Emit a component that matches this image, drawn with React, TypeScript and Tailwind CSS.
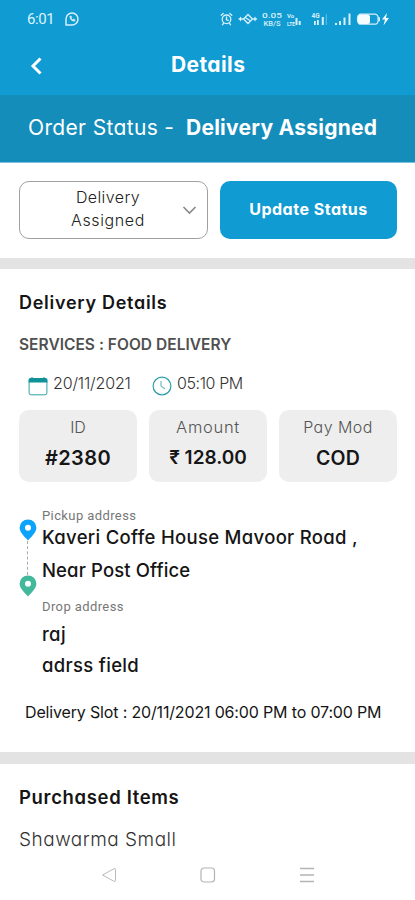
import React from "react";

function StatusIcons() {
  return (
    <svg width="172" height="20" viewBox="0 0 172 20" fill="none" stroke="#d8f0fb" strokeWidth="1.3" strokeLinecap="round">
      <circle cx="6.5" cy="10.300" r="4.300" />
      <path d="M6.5 8v2.800l1.800.6M1.200 6.300l2-1.800M11.800 6.300l-2-1.800M3.500 14.500l-1 1.200M9.500 14.500l1 1.200" />
      <path d="M19 10h4M33 10h3.500M20.500 8.500v3M35 8.500v3M23.500 10l4.500-4.500 4.500 4.500-4.500 4.500zM26 9l4 2.500" />
      <g fill="#d8f0fb" stroke="none" fontFamily="Roboto, sans-serif" fontWeight="500">
        <text x="42" y="9" fontSize="8" textLength="20" lengthAdjust="spacingAndGlyphs">0.05</text>
        <text x="43.500" y="17" fontSize="6.500" textLength="17" lengthAdjust="spacingAndGlyphs">KB/S</text>
        <text x="67" y="9" fontSize="6" fontWeight="700">Vo</text>
        <text x="67" y="16.500" fontSize="5.500" fontWeight="700" textLength="8" lengthAdjust="spacingAndGlyphs">LTE</text>
        <text x="91.500" y="9.300" fontSize="6.500" fontWeight="700">4G</text>
      </g>
      <g fill="#d8f0fb" stroke="none">
        <path d="M75.500 9h2v7h-2zM78.700 12h2v4h-2z" />
        <path d="M94 12h1.800v4h-1.800zM97 11h1.800v5h-1.800zM101.800 8h2v8h-2z" />
        <path d="M105.800 5h1v11h-1z" opacity=".45" />
        <path d="M115 14h2v2h-2zM119 12h2v4h-2zM123.500 8.500h2v7.500h-2zM128.500 4.500h2v11.500h-2z" />
      </g>
      <rect x="137.600" y="5.200" width="20.500" height="10" rx="3.500" />
      <rect x="138" y="5.500" width="12" height="9.500" rx="2.500" fill="#f5fcff" stroke="none" />
      <path d="M159.200 8.700v3" strokeWidth="1.500" />
      <path d="M167 4l-5 6.500h3l-1.500 6 5.500-7.500h-3z" fill="#f5fcff" stroke="none" />
    </svg>
  );
}

function Pin({ color }: { color: string }) {
  return (
    <svg className="block shrink-0" width="18" height="22" viewBox="0 0 18 22">
      <path d="M9 21.500C6 18 .6 13.500.6 8.800a8.400 8.400 0 0 1 16.800 0C17.400 13.500 12 18 9 21.500z" fill={color} />
      <circle cx="9" cy="8.800" r="3" fill="#fff" />
    </svg>
  );
}

function Stat({ label, value, labelClass, valueClass }: { label: string; value: string; labelClass: string; valueClass: string }) {
  return (
    <div className="flex h-[72px] w-[118px] flex-col items-center rounded-[10px] bg-[#eeeeee] pt-1.5">
      <div className={"h-[22px] leading-[22px] font-light text-[#555] " + labelClass}>{label}</div>
      <div className={"mt-1 h-8 leading-8 font-semibold text-[#161616] " + valueClass}>{value}</div>
    </div>
  );
}

export default function App() {
  return (
    <div className="flex h-[900px] w-[415px] flex-col overflow-hidden bg-white font-[Inter,sans-serif] whitespace-nowrap text-[#151515] [font-feature-settings:'cv11']">
      <header className="h-[95px] bg-[#109bd2] text-white">
        <div className="flex h-[38px] items-center pl-[27px]">
          <span className="w-[38px] font-[Roboto,sans-serif] text-[15px] leading-5 tracking-[-0.4px] text-[#dff3fc]">6:01</span>
          <svg width="14" height="14" viewBox="0 0 14 14" fill="none" stroke="#d8f0fb" strokeWidth="1.500">
            <path d="M1 13V7a6 6 0 1 1 6 6z" strokeLinejoin="round" />
            <path d="M4.800 4.200c0 3 2 5 5 5l.3-1.500-1.600-.6-.8.7-1.500-1.500.6-.9-.7-1.500z" fill="#d8f0fb" strokeWidth=".5" />
          </svg>
          <div className="ml-[141px]"><StatusIcons /></div>
        </div>
        <div className="flex h-[52px] items-center pl-[29px]">
          <svg className="mt-1" width="14" height="18" viewBox="0 0 14 18" fill="none" stroke="#fff" strokeWidth="3">
            <path d="M11.500 1.500L4 9l7.500 7.500" />
          </svg>
          <h1 className="ml-[128px] pt-px text-[21px] leading-7 font-bold tracking-[0.4px]">Details</h1>
        </div>
      </header>
      <div className="flex h-[68px] items-center border-b border-[#7fc0dc] bg-[#148dba] pb-px pl-[28px] text-white">
        <span className="w-[158px] text-[21px] tracking-[0.35px]">Order Status -</span>
        <span className="text-[21px] font-bold tracking-[0.25px]">Delivery Assigned</span>
      </div>
      <div className="flex h-[95px] gap-3 pt-[18px] pl-[19px]">
        <div className="flex h-[58px] w-[189px] items-center rounded-[10px] border border-[#a0a0a0]">
          <div className="flex w-[176px] flex-col items-center pb-[3px] text-[16px] leading-[22.500px] font-light text-[#222]">
            <span className="tracking-[0.4px]">Delivery</span>
            <span className="tracking-[0.6px]">Assigned</span>
          </div>
          <svg className="-ml-[14px]" width="15" height="9" viewBox="0 0 15 9" fill="none" stroke="#888" strokeWidth="1.600">
            <path d="M1.500 1l6 6 6-6" />
          </svg>
        </div>
        <button className="h-[58px] w-[177px] rounded-[10px] bg-[#109bd2] pb-[3px] text-[16px] font-bold tracking-[0.5px] text-white">Update Status</button>
      </div>
      <div className="h-[11px] bg-[#e3e3e3]" />
      <section className="h-[483px] pt-5 pl-[19px]">
        <h2 className="h-[26px] text-[18px] leading-[27px] font-semibold tracking-[0.72px]">Delivery Details</h2>
        <div className="mt-[18px] h-6 text-[15.500px] leading-6 font-semibold tracking-[0.03px] text-[#505050]">SERVICES : FOOD DELIVERY</div>
        <div className="mt-[14px] flex h-[26px] items-center pl-[9px] text-[16px] font-light text-[#333]">
          <svg className="mt-1 mr-[5px]" width="20" height="20" viewBox="0 0 20 20">
            <rect x="1.100" y="2.500" width="17.800" height="16.300" rx="2" fill="none" stroke="#32a2ab" />
            <path d="M.6 6.500V4q0-2 2-2h14.800q2 0 2 2v2.500z" fill="#109299" />
            <path d="M4 1v2M16 1v2" stroke="#109299" />
          </svg>
          <span className="w-[99px] pb-[2px] tracking-[-0.15px]">20/11/2021</span>
          <svg className="mt-[3px] mr-[5px]" width="20" height="20" viewBox="0 0 20 20" fill="none" stroke="#259aa2" strokeWidth="1.200">
            <circle cx="10" cy="10" r="8.900" />
            <path d="M9 5v5l4 3" stroke="#72bdc2" />
            <path d="M10 1v1.500M10 17.500V19M1 10h1.500M17.500 10H19" stroke="#8bc9cd" />
          </svg>
          <span className="pb-[2px] tracking-[-0.4px]">05:10 PM</span>
        </div>
        <div className="mt-[13px] flex gap-3">
          <Stat label="ID" value="#2380" labelClass="text-[16px] tracking-[0px]" valueClass="text-[20px] tracking-[0.4px]" />
          <Stat label="Amount" value="₹ 128.00" labelClass="text-[16.500px] tracking-[0.7px]" valueClass="text-[19px] tracking-[0px]" />
          <Stat label="Pay Mod" value="COD" labelClass="text-[16px] tracking-[0.45px]" valueClass="text-[19.500px] tracking-[0.2px]" />
        </div>
        <div className="mt-6 flex h-[176px]">
          <div className="flex w-[23px] flex-col items-start pt-[13px]">
            <Pin color="#0da3fb" />
            <div className="ml-[8px] h-[34px] border-l border-dashed border-[#aaa]" />
            <Pin color="#42b99a" />
          </div>
          <div>
            <div className="h-5 font-[Roboto,sans-serif] text-[13px] leading-5 tracking-[0.4px] text-[#777]">Pickup address</div>
            <div className="-mt-2 leading-[33px] font-medium">
              <div className="mt-[3px] text-[18.500px] tracking-[0.31px]">Kaveri Coffe House Mavoor Road ,</div>
              <div className="text-[18.500px] tracking-[0.13px]">Near Post Office</div>
            </div>
            <div className="mt-[9.500px] h-5 font-[Roboto,sans-serif] text-[13px] leading-5 tracking-[0.4px] text-[#777]">Drop address</div>
            <div className="mt-[2px] text-[18.500px] leading-[31px] font-medium tracking-[0.32px]">
              <div>raj</div>
              <div>adrss field</div>
            </div>
          </div>
        </div>
        <div className="mt-[18px] pl-1.5 text-[16px] leading-6 tracking-[-0.16px]">Delivery Slot : 20/11/2021 06:00 PM to 07:00 PM</div>
      </section>
      <div className="h-[12px] bg-[#e3e3e3]" />
      <section className="pt-5 pl-[19px]">
        <h2 className="h-[26px] text-[18.500px] leading-[26px] font-semibold tracking-[0.65px]">Purchased Items</h2>
        <div className="mt-[17px] h-[26px] text-[19px] leading-[26px] font-light tracking-[0.5px] text-[#333]">Shawarma Small</div>
      </section>
      <nav className="mt-[14px] flex h-4 items-center pl-[101px]">
        <svg width="16" height="16" viewBox="0 0 16 16" fill="none" stroke="#bbb"><path d="M1.500 8L13 1.700q1.500-.6 1.500 1v10.600q0 1.600-1.500 1z" /></svg>
        <svg className="ml-[83px]" width="16" height="16" viewBox="0 0 16 16" fill="none" stroke="#b4b4b4" strokeWidth="1.200"><rect x="1" y="1" width="13.500" height="14" rx="3" /></svg>
        <svg className="ml-[83px]" width="16" height="16" viewBox="0 0 16 16" fill="none" stroke="#b4b4b4" strokeWidth="1.300"><path d="M1 1.500h14M1 8h14M1 14.500h14" /></svg>
      </nav>
    </div>
  );
}
